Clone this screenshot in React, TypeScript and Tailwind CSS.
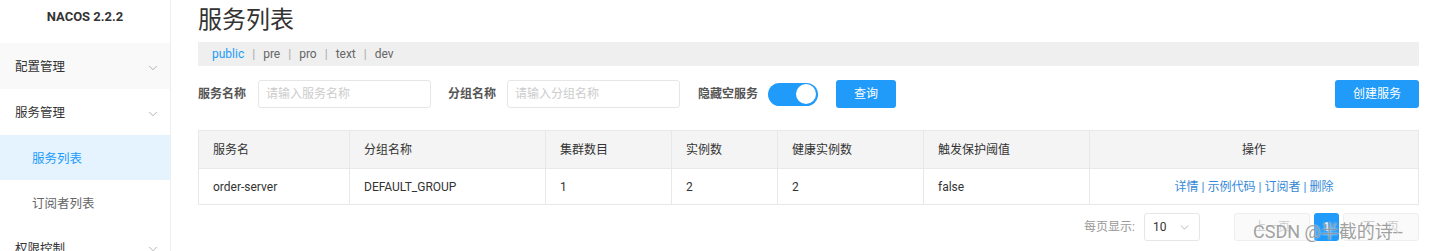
import { ChevronDown } from "lucide-react";

const font = { fontFamily: 'Roboto, "Noto Sans CJK SC", sans-serif' };

function MenuItem({
  label,
  sub,
  active,
  hover,
  chevron,
  h,
}: {
  label: string;
  sub?: boolean;
  active?: boolean;
  hover?: boolean;
  chevron?: boolean;
  h: string;
}) {
  return (
    <div
      className={`flex items-center justify-between pr-[10px] pt-[3px] text-[12.5px] ${h} ${
        sub ? "pl-[32px]" : "pl-[15px]"
      } ${active ? "bg-[#e5f3ff] text-[#209bfa]" : hover ? "bg-[#f9f9f9]" : "bg-white"} ${
        !active && sub ? "text-[#666]" : !active ? "text-[#333]" : ""
      }`}
    >
      <span>{label}</span>
      {chevron && <ChevronDown className="h-[14px] w-[14px] text-[#999]" strokeWidth={1.3} />}
    </div>
  );
}

const cols = [
  { label: "服务名", w: "w-[151px]" },
  { label: "分组名称", w: "w-[196px]" },
  { label: "集群数目", w: "w-[126px]" },
  { label: "实例数", w: "w-[106px]" },
  { label: "健康实例数", w: "w-[146px]" },
  { label: "触发保护阈值", w: "w-[166px]" },
];

const row = ["order-server", "DEFAULT_GROUP", "1", "2", "2", "false"];

export default function App() {
  return (
    <div className="relative flex h-[251px] w-[1430px] overflow-hidden bg-white" style={font}>
      {/* Sidebar */}
      <aside className="w-[171px] shrink-0 border-r border-[#eee] bg-white">
        <div className="flex h-[43px] items-start justify-center pt-[7px] text-[13px] font-bold text-[#333]">
          NACOS 2.2.2
        </div>
        <MenuItem label="配置管理" chevron hover h="h-[46px]" />
        <MenuItem label="服务管理" chevron h="h-[46px]" />
        <MenuItem label="服务列表" sub active h="h-[45px]" />
        <MenuItem label="订阅者列表" sub h="h-[45px]" />
        <MenuItem label="权限控制" chevron h="h-[45px]" />
      </aside>

      {/* Main */}
      <main className="flex-1 pl-[27px] pr-[11px]">
        <h1 className="h-[42px] text-[24px] leading-[40px] text-[#333]">服务列表</h1>

        <div className="flex h-[24px] items-center bg-[#efefef] pl-[14px] text-[12px] text-[#666]">
          <span className="text-[#209bfa]">public</span>
          <span className="mx-[8px] text-[#aaa]">|</span>
          <span>pre</span>
          <span className="mx-[8px] text-[#aaa]">|</span>
          <span>pro</span>
          <span className="mx-[8px] text-[#aaa]">|</span>
          <span>text</span>
          <span className="mx-[8px] text-[#aaa]">|</span>
          <span>dev</span>
        </div>

        <div className="mt-[14px] flex h-[28px] items-center text-[12px]">
          <span className="w-[60px] font-bold text-[#555]">服务名称</span>
          <div className="flex h-[28px] w-[173px] items-center rounded-[3px] border border-[#e6e6e6] pl-[7px] text-[#ccc]">
            请输入服务名称
          </div>
          <span className="ml-[17px] w-[59px] font-bold text-[#555]">分组名称</span>
          <div className="flex h-[28px] w-[173px] items-center rounded-[3px] border border-[#e6e6e6] pl-[7px] text-[#ccc]">
            请输入分组名称
          </div>
          <span className="ml-[18px] w-[70px] font-bold text-[#555]">隐藏空服务</span>
          <div className="flex h-[23px] w-[50px] items-center justify-end rounded-full bg-[#209bfa] pr-[2px]">
            <div className="h-[20px] w-[20px] rounded-full bg-white" />
          </div>
          <button className="ml-[18px] h-[28px] w-[60px] rounded-[3px] bg-[#209bfa] text-[12px] text-white">
            查询
          </button>
          <div className="flex-1" />
          <button className="h-[28px] w-[84px] rounded-[3px] bg-[#209bfa] text-[12px] text-white">
            创建服务
          </button>
        </div>

        {/* Table */}
        <div className="mt-[22px] border border-[#e8e8e8] text-[12px]">
          <div className="flex h-[37px] bg-[#f4f4f4] text-[#333]">
            {cols.map((c) => (
              <div key={c.label} className={`${c.w} flex items-center border-r border-[#e8e8e8] pl-[14px]`}>
                {c.label}
              </div>
            ))}
            <div className="flex flex-1 items-center justify-center">操作</div>
          </div>
          <div className="flex h-[36px] border-t border-[#e8e8e8] text-[#333]">
            {row.map((v, i) => (
              <div key={i} className={`${cols[i].w} flex items-center border-r border-[#e8e8e8] pl-[14px]`}>
                {v}
              </div>
            ))}
            <div className="flex flex-1 items-center justify-center text-[#3589d8]">
              <span>详情</span>
              <span className="mx-[3px]">|</span>
              <span>示例代码</span>
              <span className="mx-[3px]">|</span>
              <span>订阅者</span>
              <span className="mx-[3px]">|</span>
              <span>删除</span>
            </div>
          </div>
        </div>

        {/* Pagination */}
        <div className="mt-[8px] flex h-[28px] items-center justify-end text-[12px]">
          <span className="text-[#999]">每页显示:</span>
          <div className="ml-[9px] flex h-[28px] w-[56px] items-center justify-between rounded-[3px] border border-[#e6e6e6] pl-[8px] pr-[8px] text-[#333]">
            <span>10</span>
            <ChevronDown className="h-[13px] w-[13px] text-[#999]" strokeWidth={1.3} />
          </div>
          <div className="ml-[34px] flex h-[28px] w-[76px] items-center justify-center rounded-[3px] border border-[#eee] bg-[#fafafa] text-[#ccc]">
            上一页
          </div>
          <div className="ml-[4px] flex h-[28px] w-[25px] items-center justify-center rounded-[3px] bg-[#209bfa] text-white">
            1
          </div>
          <div className="ml-[4px] flex h-[28px] w-[76px] items-center justify-center rounded-[3px] border border-[#eee] bg-[#fafafa] text-[#ccc]">
            下一页
          </div>
        </div>
      </main>

      {/* watermark */}
      <div
        className="pointer-events-none absolute left-[1253px] top-[220px] text-[18px] leading-[24px] text-[#888]/80"
        style={{ textShadow: "0 0 2px #fff" }}
      >
        CSDN @半截的诗--
      </div>
    </div>
  );
}
